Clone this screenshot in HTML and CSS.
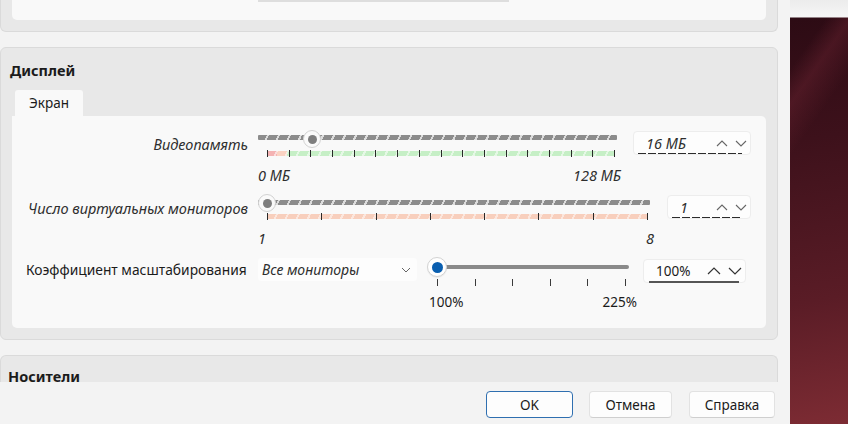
FILE: index.html
```html
<!DOCTYPE html>
<html lang="ru">
<head>
<meta charset="utf-8">
<title>Настройки</title>
<link rel="stylesheet" href="styles.css">
</head>
<body>
<div class="dialog">
  <div class="scroll">
    <div class="group group-top">
      <div class="panel panel-top"><div class="cut-control"></div></div>
    </div>

    <div class="group group-display">
      <div class="group-title">Дисплей</div>
      <div class="tab">Экран</div>
      <div class="panel panel-main">

        <div class="row">
          <div class="label italic">Видеопамять</div>
          <div class="slider s1">
            <div class="track">
              <div class="groove hatch"></div>
              <div class="thumb thumb-off s1-thumb"><span class="dot"></span></div>
            </div>
            <div class="strip strip-mem">
              <i></i><i></i><i></i><i></i><i></i><i></i><i></i><i></i><i></i><i></i><i></i><i></i><i></i><i></i><i></i><i></i><i></i>
            </div>
            <div class="scale italic"><span>0 МБ</span><span>128 МБ</span></div>
          </div>
          <div class="spin spin1">
            <span class="spin-text italic">16 МБ</span>
            <span class="arrows">
              <svg width="12" height="7" viewBox="0 0 12 7"><path d="M1 6 L6 1 L11 6" fill="none" stroke="#666" stroke-width="1.1"/></svg>
              <svg width="12" height="7" viewBox="0 0 12 7"><path d="M1 1 L6 6 L11 1" fill="none" stroke="#666" stroke-width="1.1"/></svg>
            </span>
            <span class="underline dashed"></span>
          </div>
        </div>

        <div class="row">
          <div class="label italic">Число виртуальных мониторов</div>
          <div class="slider s2">
            <div class="track">
              <div class="groove hatch"></div>
              <div class="thumb thumb-off s2-thumb"><span class="dot"></span></div>
            </div>
            <div class="strip strip-mon">
              <i></i><i></i><i></i><i></i><i></i><i></i><i></i><i></i>
            </div>
            <div class="scale italic"><span>1</span><span>8</span></div>
          </div>
          <div class="spin spin2">
            <span class="spin-text italic">1</span>
            <span class="arrows">
              <svg width="12" height="7" viewBox="0 0 12 7"><path d="M1 6 L6 1 L11 6" fill="none" stroke="#666" stroke-width="1.1"/></svg>
              <svg width="12" height="7" viewBox="0 0 12 7"><path d="M1 1 L6 6 L11 1" fill="none" stroke="#666" stroke-width="1.1"/></svg>
            </span>
            <span class="underline dashed"></span>
          </div>
        </div>

        <div class="row row3">
          <div class="label">Коэффициент масштабирования</div>
          <div class="combo">
            <span class="italic">Все мониторы</span>
            <svg width="10" height="6" viewBox="0 0 10 6"><path d="M1 1 L5 5 L9 1" fill="none" stroke="#666" stroke-width="1"/></svg>
          </div>
          <div class="slider s3">
            <div class="track">
              <div class="groove groove-on"></div>
              <div class="thumb thumb-on"><span class="dot"></span></div>
            </div>
            <div class="ticks"><i></i><i></i><i></i><i></i><i></i><i></i></div>
            <div class="scale"><span>100%</span><span>225%</span></div>
          </div>
          <div class="spin spin3">
            <span class="spin-text">100%</span>
            <span class="arrows">
              <svg width="14" height="8" viewBox="0 0 14 8"><path d="M1 7 L7 1 L13 7" fill="none" stroke="#333" stroke-width="1.2"/></svg>
              <svg width="14" height="8" viewBox="0 0 14 8"><path d="M1 1 L7 7 L13 1" fill="none" stroke="#333" stroke-width="1.2"/></svg>
            </span>
            <span class="underline solid"></span>
          </div>
        </div>

      </div>
    </div>

    <div class="group group-media">
      <div class="group-title media-title">Носители</div>
    </div>
  </div>

  <div class="footer">
    <button class="btn btn-ok">OK</button>
    <button class="btn btn-cancel">Отмена</button>
    <button class="btn btn-help">Справка</button>
  </div>
</div>
<div class="wallpaper"></div>
</body>
</html>
```

FILE: styles.css
```css
* { box-sizing: border-box; }

html, body {
  margin: 0;
  height: 100%;
}

body {
  display: flex;
  width: 848px;
  height: 424px;
  overflow: hidden;
  background: #f3f3f3;
  font-family: "Noto Sans", "Open Sans", sans-serif;
  font-size: 13.5px;
  color: #1b1b1b;
}

.italic { font-style: italic; color: #2e2e2e; font-size: 14.5px; }

.dialog {
  width: 790px;
  height: 424px;
  background: #f3f3f3;
  display: flex;
  flex-direction: column;
}

.scroll {
  height: 382px;
  width: 778px;
  flex: none;
}

.group {
  background: #e8e8e8;
  border: 1px solid #dadada;
  border-radius: 6px;
}

.group-top {
  height: 32px;
  border-top: none;
  border-radius: 0 0 6px 6px;
  padding: 0 11px;
}

.panel {
  background: #f9f9f9;
  border-radius: 5px;
}

.panel-top {
  height: 20px;
  border-radius: 0 0 5px 5px;
  padding-left: 246px;
}

.cut-control {
  width: 251px;
  height: 2px;
  background: #dedede;
}

.group-display {
  margin-top: 15px;
  height: 293px;
  padding: 12px 11px 0 11px;
}

.group-title {
  font-weight: 700;
  font-size: 14.5px;
  line-height: 20px;
  margin-left: -2px;
}

.tab {
  margin-top: 10px;
  margin-left: 3px;
  width: 68px;
  height: 26px;
  background: #f9f9f9;
  border-radius: 3px 3px 0 0;
  line-height: 26px;
  text-align: center;
}

.panel-main {
  height: 212px;
  padding-top: 14px;
  border-radius: 0 5px 5px 5px;
}

.row {
  display: flex;
  align-items: flex-start;
  height: 64px;
}

.row3 { height: 80px; margin-top: -1px; }

.label {
  width: 236px;
  margin-right: 10px;
  text-align: right;
  line-height: 18px;
  margin-top: 5px;
  white-space: nowrap;
}

.row3 .label {
  text-align: left;
  padding-left: 14px;
  margin-top: 4px;
  font-size: 13.8px;
}

.slider { position: relative; }

.track {
  position: relative;
  height: 18px;
  display: flex;
  align-items: center;
}

.groove {
  height: 5px;
  width: 100%;
  border-radius: 1px;
}

.hatch {
  background: repeating-linear-gradient(115deg, #8c8c8c 0 8px, #dcdcdc 8px 10px);
}

.thumb {
  position: absolute;
  top: 0;
  width: 18px;
  height: 18px;
  border-radius: 50%;
  background: #fafafa;
  border: 1px solid #d2d2d2;
  display: flex;
  align-items: center;
  justify-content: center;
}

.thumb-off .dot {
  width: 9px;
  height: 9px;
  border-radius: 50%;
  background: #7e7e7e;
}

.s1 { width: 363px; }
.s1 .groove { width: 359px; margin-top: -3px; }
.s1-thumb { left: 45px; }

.s2 { width: 396px; }
.s2 .groove { width: 392px; margin-top: -1px; }
.s2-thumb { left: 0; }

.strip {
  height: 5px;
  margin-top: 3px;
  display: flex;
  justify-content: space-between;
  align-items: center;
}

.strip i, .ticks i {
  display: block;
  width: 1px;
  height: 7px;
  background: #2a2a2a;
}

.strip-mem {
  margin-left: 9px;
  width: 348px;
  background:
    repeating-linear-gradient(115deg, rgba(255,255,255,0) 0 8px, rgba(255,255,255,0.55) 8px 10px),
    linear-gradient(90deg, #f4b3b3 0 10px, #fbd3c3 10px 20px, #c6efc6 20px);
}

.strip-mon {
  margin-left: 9px;
  width: 381px;
  margin-top: 2px;
  background:
    repeating-linear-gradient(115deg, rgba(255,255,255,0) 0 8px, rgba(255,255,255,0.5) 8px 10px),
    #f8cfbd;
}

.scale {
  display: flex;
  justify-content: space-between;
  line-height: 18px;
  margin-top: 10px;
}

.spin {
  position: relative;
  height: 24px;
  margin-top: 1px;
  background: #fdfdfd;
  border: 1px solid #ededed;
  border-radius: 4px;
  display: flex;
  align-items: center;
  padding-left: 12px;
}

.spin-text { flex: 1; line-height: 18px; }

.arrows {
  display: flex;
  align-items: center;
  gap: 7px;
  padding-right: 3px;
}

.underline {
  position: absolute;
  bottom: 0;
  left: 4px;
  right: 8px;
  height: 1px;
}

.dashed {
  background: repeating-linear-gradient(90deg, #2b2b2b 0 8px, transparent 8px 10px);
}

.solid {
  height: 2px;
  background: #555;
  left: 5px;
  right: 6px;
  bottom: -1px;
}

.spin1 { width: 118px; margin-left: 12px; }
.spin2 { width: 84px; margin-left: 13px; }

.combo {
  width: 159px;
  height: 23px;
  margin-top: 1px;
  background: #fdfdfd;
  border-radius: 4px;
  display: flex;
  align-items: center;
  justify-content: space-between;
  padding: 0 6px 0 4px;
}

.combo .italic { font-size: 14px; }

.s3 { width: 209px; margin-left: 9px; }
.s3 .track { height: 20px; }
.s3 .groove { margin-left: 11px; width: 192px; height: 4px; background: #8a8a8a; border-radius: 2px; }

.thumb-on {
  width: 20px;
  height: 20px;
  left: 1px;
  border: 1px solid #d3d3d3;
  background: #fff;
  box-shadow: 0 1px 1px rgba(0,0,0,0.06);
}

.thumb-on .dot {
  width: 11px;
  height: 11px;
  border-radius: 50%;
  background: #0a5fb0;
}

.ticks {
  margin-left: 11px;
  width: 189px;
  margin-top: 2px;
  display: flex;
  justify-content: space-between;
}

.ticks i { background: #3a3a3a; }

.s3 .scale { margin-top: 7px; width: 208px; margin-left: 3px; }

.spin3 { width: 103px; margin-left: 8px; margin-top: 2px; }

.group-media {
  margin-top: 15px;
  height: 27px;
  border-bottom: none;
  border-radius: 6px 6px 0 0;
  padding: 12px 10px 0 9px;
}

.media-title { line-height: 16px; }

.footer {
  flex: 1;
  display: flex;
  justify-content: flex-end;
  align-items: flex-start;
  padding: 9px 15px 0 0;
  gap: 16px;
}

.btn {
  font-family: inherit;
  font-size: 13.5px;
  color: #1b1b1b;
  height: 27px;
  background: #fdfdfd;
  border: 1px solid #e2e2e2;
  border-bottom-color: #cfcfcf;
  border-radius: 4px;
  padding: 0;
}

.btn-ok { width: 87px; border: 1px solid #2f6fb0; }
.btn-cancel { width: 83px; }
.btn-help { width: 86px; margin-left: 1px; }

.wallpaper {
  flex: 1;
  height: 424px;
  background:
    linear-gradient(180deg, #ececec 0, #f6f6f6 17px, rgba(0,0,0,0) 18px),
    linear-gradient(125deg, rgba(0,0,0,0) 0 40px, rgba(120,40,55,0.35) 60px, rgba(0,0,0,0) 90px),
    linear-gradient(170deg, #2a0a13 0, #3d111b 140px, #5a1c26 300px, #7c2b33 424px);
}
```
